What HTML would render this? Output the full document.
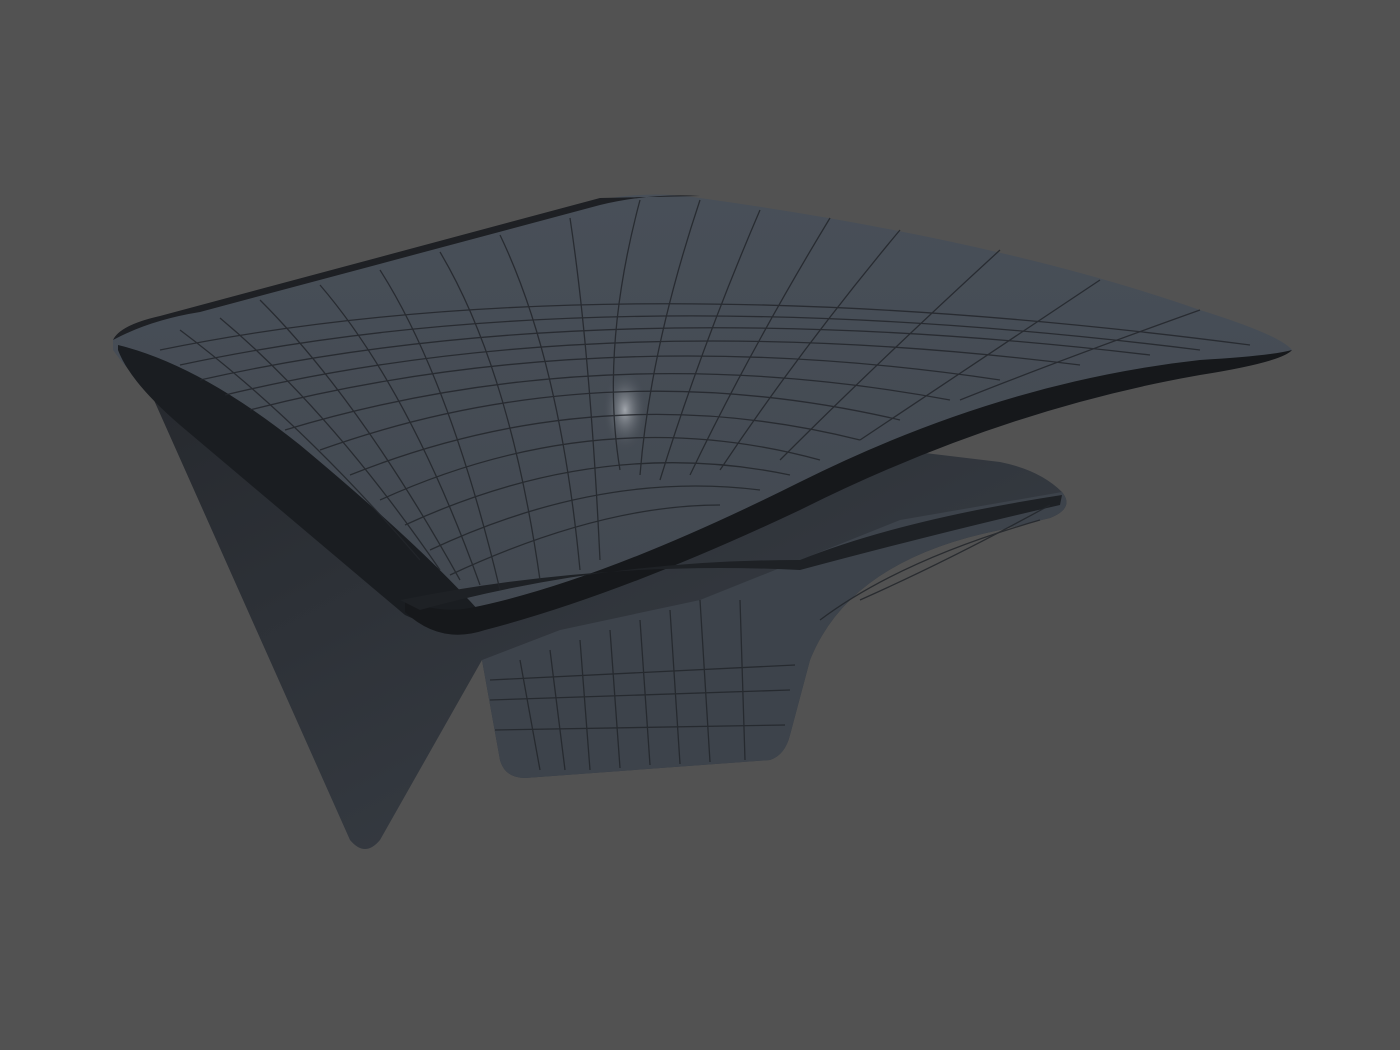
<!DOCTYPE html>
<html><head><meta charset="utf-8"><style>
html,body{margin:0;padding:0;background:#525252;width:1400px;height:1050px;overflow:hidden}
</style></head><body>
<svg width="1400" height="1050" viewBox="0 0 1400 1050" xmlns="http://www.w3.org/2000/svg">
<defs>
<linearGradient id="top" x1="0" y1="0" x2="0" y2="1">
<stop offset="0" stop-color="#484f58"/><stop offset="1" stop-color="#424850"/>
</linearGradient>
<linearGradient id="low" x1="0" y1="0" x2="1" y2="1">
<stop offset="0" stop-color="#26292e"/><stop offset="1" stop-color="#3c424a"/>
</linearGradient>
<radialGradient id="hl" cx="0.5" cy="0.5" r="0.5">
<stop offset="0" stop-color="#b8bcc2" stop-opacity="0.8"/><stop offset="1" stop-color="#4a5058" stop-opacity="0"/>
</radialGradient>
</defs>
<rect width="1400" height="1050" fill="#525252"/>
<path d="M145 380 L350 840 Q365 858 380 840 L482 660 L500 760 Q505 778 525 778 L770 760 Q785 755 790 735 L810 660 Q850 560 1000 530 L1050 518 Q1075 508 1062 492 Q1040 470 1000 462 L900 450 L600 560 L420 610 Z" fill="url(#low)"/>
<path d="M482 660 L500 760 Q505 778 525 778 L770 760 Q785 755 790 735 L810 660 Q850 560 1000 530 L1050 518 Q1075 508 1062 492 L900 520 L700 600 L560 630 Z" fill="#3d434b"/>
<path d="M113 340 Q120 325 160 318 L600 200 Q650 190 700 198 Q1000 240 1200 310 Q1280 335 1292 350 Q1280 362 1200 372 Q1000 400 800 500 Q600 600 470 628 Q430 635 410 615 L180 420 Q130 375 113 350 Z" fill="url(#top)"/>
<ellipse cx="625" cy="410" rx="22" ry="40" fill="url(#hl)"/>
<path d="M118 345 Q200 365 300 445 Q420 545 480 612 Q440 632 405 615 L180 425 Q130 382 118 350 Z" fill="#1a1d21"/>
<path d="M405 612 Q440 645 485 630 Q620 595 800 510 Q1000 410 1200 375 Q1282 362 1292 350 Q1270 356 1200 360 Q1000 382 800 482 Q600 582 470 608 Q440 614 405 600 Z" fill="#16181b"/>
<path d="M113 340 Q150 320 200 312 L600 205 Q650 193 700 196 L600 198 L160 316 Q120 325 113 340 Z" fill="#1e2024"/>
<path d="M400 600 Q600 560 800 570 Q950 530 1060 505 L1062 495 Q900 520 800 560 Q600 560 420 610 Z" fill="#1e2125"/>
<g stroke="#23262b" stroke-width="1.3" fill="none" opacity="0.85">
<path d="M180 330 Q300 420 420 560"/><path d="M220 318 Q330 410 440 570"/><path d="M260 300 Q360 400 460 580"/>
<path d="M320 285 Q410 390 480 585"/><path d="M380 270 Q450 380 500 590"/><path d="M440 252 Q510 370 540 580"/>
<path d="M500 235 Q560 360 580 570"/><path d="M570 218 Q590 350 600 560"/>
<path d="M640 200 Q600 350 620 470"/><path d="M700 200 Q650 350 640 475"/><path d="M760 210 Q700 350 660 480"/>
<path d="M830 218 Q750 350 690 475"/><path d="M900 230 Q800 350 720 470"/><path d="M1000 250 Q880 360 780 460"/>
<path d="M1100 280 Q980 360 860 440"/><path d="M1200 310 Q1060 360 960 400"/>
<path d="M160 350 Q600 260 1250 345"/><path d="M180 365 Q600 275 1200 350"/><path d="M200 380 Q600 290 1150 355"/>
<path d="M225 395 Q600 305 1080 365"/><path d="M250 410 Q600 320 1000 380"/><path d="M285 430 Q600 335 950 400"/>
<path d="M320 450 Q600 350 900 420"/><path d="M350 475 Q600 375 860 440"/><path d="M380 500 Q600 400 820 460"/>
<path d="M405 525 Q600 435 790 475"/><path d="M430 550 Q600 470 760 490"/><path d="M450 575 Q600 505 720 505"/>
<path d="M520 660 L540 770"/><path d="M550 650 L565 770"/><path d="M580 640 L590 770"/><path d="M610 630 L620 768"/><path d="M640 620 L650 765"/>
<path d="M670 610 L680 764"/><path d="M700 600 L710 762"/><path d="M740 600 L745 760"/>
<path d="M490 680 L795 665"/><path d="M490 700 L790 690"/><path d="M495 730 L785 725"/>
<path d="M820 620 Q900 560 1040 520"/><path d="M860 600 Q950 560 1050 505"/>
</g>
</svg>
</body></html>
